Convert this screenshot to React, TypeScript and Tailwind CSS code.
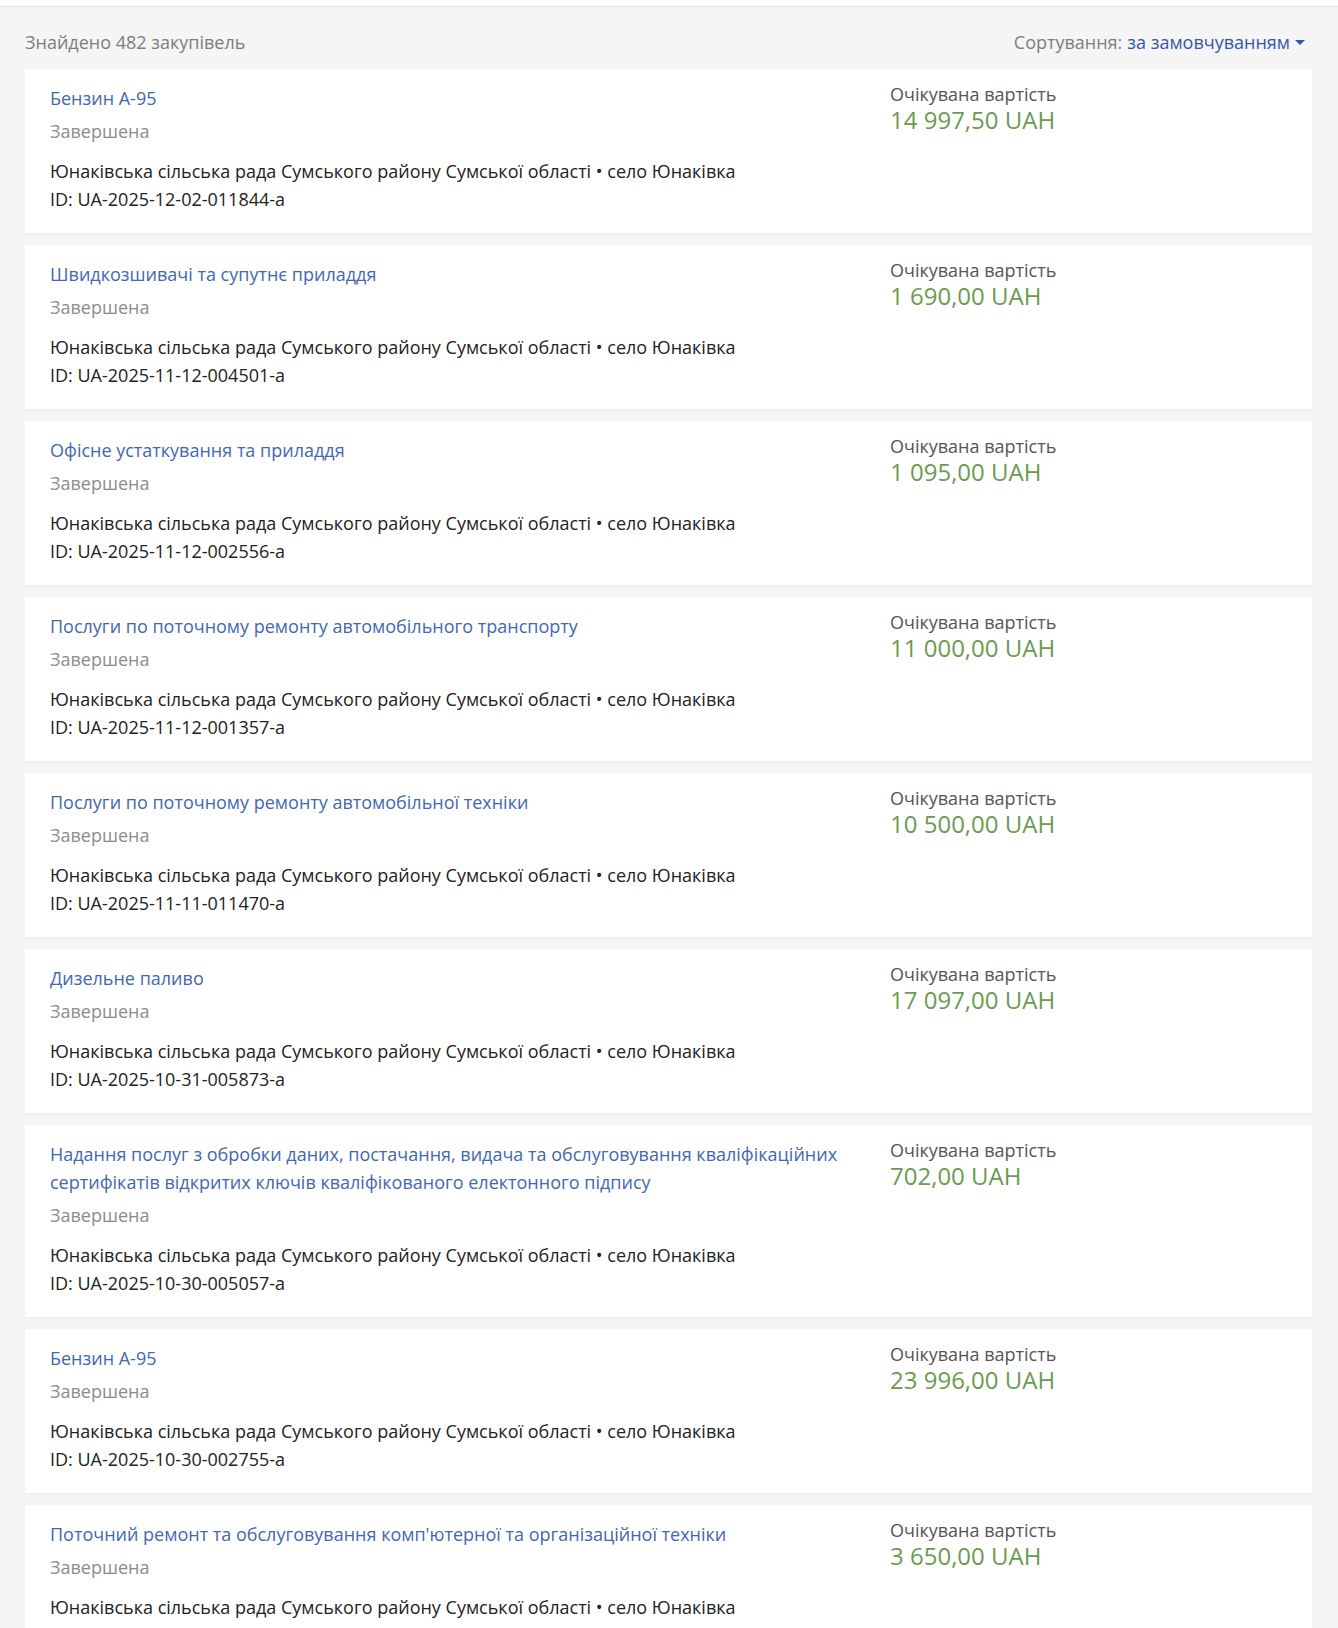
const TENDERS = [
  { title: 'Бензин А-95', id: 'UA-2025-12-02-011844-a', amount: '14 997,50 UAH' },
  { title: 'Швидкозшивачі та супутнє приладдя', id: 'UA-2025-11-12-004501-a', amount: '1 690,00 UAH' },
  { title: 'Офісне устаткування та приладдя', id: 'UA-2025-11-12-002556-a', amount: '1 095,00 UAH' },
  { title: 'Послуги по поточному ремонту автомобільного транспорту', id: 'UA-2025-11-12-001357-a', amount: '11 000,00 UAH' },
  { title: 'Послуги по поточному ремонту автомобільної техніки', id: 'UA-2025-11-11-011470-a', amount: '10 500,00 UAH' },
  { title: 'Дизельне паливо', id: 'UA-2025-10-31-005873-a', amount: '17 097,00 UAH' },
  {
    title:
      'Надання послуг з обробки даних, постачання, видача та обслуговування кваліфікаційних сертифікатів відкритих ключів кваліфікованого електонного підпису',
    id: 'UA-2025-10-30-005057-a',
    amount: '702,00 UAH',
  },
  { title: 'Бензин А-95', id: 'UA-2025-10-30-002755-a', amount: '23 996,00 UAH' },
  { title: "Поточний ремонт та обслуговування комп'ютерної та організаційної техніки", id: 'UA-2025-10-30-001564-a', amount: '3 650,00 UAH' },
]

const ORG = 'Юнаківська сільська рада Сумського району Сумської області • село Юнаківка'

function TenderCard({ title, id, amount }: { title: string; id: string; amount: string }) {
  return (
    <div className="flex bg-white pl-[25px] pr-[25px] pt-[15px] pb-[20px] shadow-[0_1px_2px_rgba(0,0,0,0.03)]">
      <div className="w-[820px] shrink-0">
        <a href="#" className="block text-[18px] leading-[28px] text-[#4168b0] hover:underline">
          {title}
        </a>
        <div className="mt-[5px] text-[18px] leading-[28px] text-[#8c8c8c]">Завершена</div>
        <div className="mt-[12px] text-[18px] leading-[28px] text-[#222]">{ORG}</div>
        <div className="text-[18px] leading-[28px] text-[#222]">ID: {id}</div>
      </div>
      <div className="ml-[20px] -mt-[2px]">
        <div className="text-[18px] leading-[24px] text-[#555]">Очікувана вартість</div>
        <div className="text-[24px] leading-[28px] text-[#6b9b50]">{amount}</div>
      </div>
    </div>
  )
}

export default function App() {
  return (
    <div className="min-h-screen bg-[#f5f5f5] font-['Open_Sans','Liberation_Sans',sans-serif]">
      <div className="h-[7px] bg-white border-b border-[#e4e4e4]" />
      <div className="pl-[25px] pr-[26px]">
        <div className="flex items-center justify-between pt-[21px] mb-[13px] pr-[7px] text-[18px] leading-[28px]">
          <span className="text-[#7d7d7d]">Знайдено 482 закупівель</span>
          <span className="flex items-center text-[#7d7d7d]">
            Сортування:
            <button className="ml-[5px] flex items-center text-[#3556a8]">
              за замовчуванням
              <span className="ml-[5px] inline-block h-0 w-0 border-x-[5px] border-t-[5px] border-x-transparent border-t-[#3556a8]" />
            </button>
          </span>
        </div>
        <div className="flex flex-col gap-[12px]">
          {TENDERS.map((t, i) => (
            <TenderCard key={i} {...t} />
          ))}
        </div>
      </div>
    </div>
  )
}
